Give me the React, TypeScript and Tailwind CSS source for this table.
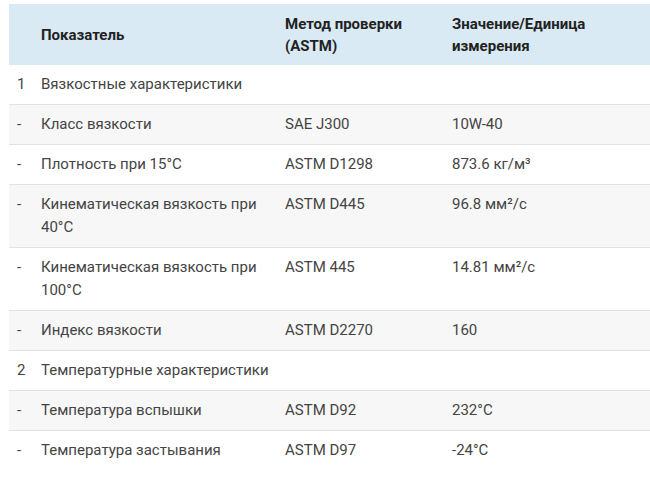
import React from "react";

type Row = { n: string; a: string; b: string; c: string; shade: boolean };

const rows: Row[] = [
  { n: "1", a: "Вязкостные характеристики", b: "", c: "", shade: false },
  { n: "-", a: "Класс вязкости", b: "SAE J300", c: "10W-40", shade: true },
  { n: "-", a: "Плотность при 15°C", b: "ASTM D1298", c: "873.6 кг/м³", shade: false },
  { n: "-", a: "Кинематическая вязкость при 40°C", b: "ASTM D445", c: "96.8 мм²/с", shade: true },
  { n: "-", a: "Кинематическая вязкость при 100°C", b: "ASTM 445", c: "14.81 мм²/с", shade: false },
  { n: "-", a: "Индекс вязкости", b: "ASTM D2270", c: "160", shade: true },
  { n: "2", a: "Температурные характеристики", b: "", c: "", shade: false },
  { n: "-", a: "Температура вспышки", b: "ASTM D92", c: "232°C", shade: true },
  { n: "-", a: "Температура застывания", b: "ASTM D97", c: "-24°C", shade: false },
];

export default function App() {
  return (
    <div className="w-[650px] h-[482px] bg-white pt-[4px] pl-[9px] overflow-hidden" style={{ fontFamily: "Roboto, 'Noto Sans', sans-serif" }}>
      <table className="w-[641px] table-fixed border-collapse text-[15px] leading-[23px] text-[#444]">
        <colgroup>
          <col className="w-[24px]" />
          <col className="w-[244px]" />
          <col className="w-[167px]" />
          <col />
        </colgroup>
        <thead>
          <tr className="bg-[#d9eaf5] text-[#222] font-bold h-[61px] leading-[22px]">
            <th className="px-2 text-left align-middle"></th>
            <th className="px-2 text-left align-middle font-bold">Показатель</th>
            <th className="px-2 text-left align-middle font-bold">Метод проверки (ASTM)</th>
            <th className="px-2 text-left align-middle font-bold">Значение/Единица измерения</th>
          </tr>
        </thead>
        <tbody>
          {rows.map((r, i) => (
            <tr
              key={i}
              className={`${r.shade ? "bg-[#f7f7f7]" : "bg-white"} ${i < rows.length - 1 ? "border-b border-[#e2e2e2]" : ""}`}
            >
              <td className="px-2 py-[8px] align-top">{r.n}</td>
              <td className="px-2 py-[8px] align-top">{r.a}</td>
              <td className="px-2 py-[8px] align-top">{r.b}</td>
              <td className="px-2 py-[8px] align-top">{r.c}</td>
            </tr>
          ))}
        </tbody>
      </table>
    </div>
  );
}
